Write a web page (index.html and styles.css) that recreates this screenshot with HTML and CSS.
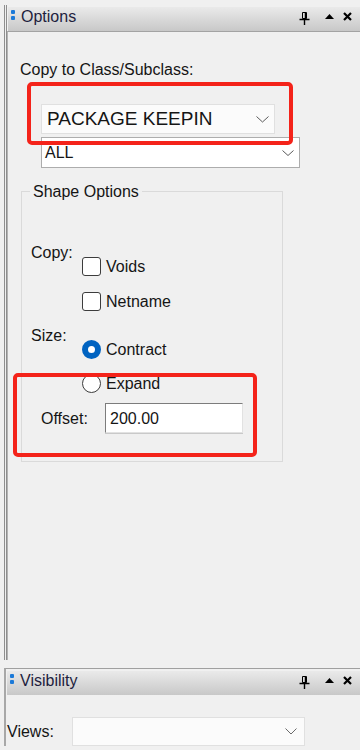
FILE: index.html
```html
<!DOCTYPE html>
<html lang="en">
  <head>
    <meta charset="UTF-8" />
    <meta name="viewport" content="width=device-width, initial-scale=1.0" />
    <title>Options</title>
    <link rel="stylesheet" href="styles.css">
  </head>
  <body>
    <section class="pane pane-options">
      <header class="titlebar">
        <span class="grip"><i></i><i></i></span>
        <span class="title">Options</span>
        <span class="tools">
          <svg class="tool-pin" width="11" height="13" viewBox="0 0 11 13">
            <path d="M3.5 0.5h4v6h-4z" fill="none" stroke="#000" />
            <path d="M6.5 1v5.5" stroke="#000" stroke-width="1.5" />
            <path d="M0.5 7.5h10M5.5 8v5" stroke="#000" stroke-width="1.4" />
          </svg>
          <svg class="tool-up" width="9" height="5" viewBox="0 0 9 5">
            <polygon points="0,5 4.5,0 9,5" fill="#000" />
          </svg>
          <svg class="tool-close" width="9" height="9" viewBox="0 0 9 9">
            <path d="M1 1l7 7M8 1l-7 7" stroke="#000" stroke-width="2.2" />
          </svg>
        </span>
      </header>

      <div class="pane-body">
        <div class="field-label">Copy to Class/Subclass:</div>

        <div class="combo combo-flat combo-class">
          <span>PACKAGE KEEPIN</span>
          <svg width="13" height="7" viewBox="0 0 13 7">
            <polyline points="0.5,0.5 6.5,6 12.5,0.5" fill="none" stroke="#5a5a5a" />
          </svg>
        </div>
        <div class="combo combo-sub">
          <span>ALL</span>
          <svg width="12" height="6" viewBox="0 0 12 6">
            <polyline points="0.5,0.5 6,5.5 11.5,0.5" fill="none" stroke="#5a5a5a" />
          </svg>
        </div>

        <fieldset class="group">
          <legend>Shape Options</legend>

          <div class="opt-row opt-copy">
            <div class="opt-label">Copy:</div>
            <div class="opt-list">
              <div class="check"><span class="box"></span>Voids</div>
              <div class="check"><span class="box"></span>Netname</div>
            </div>
          </div>

          <div class="opt-row opt-size">
            <div class="opt-label">Size:</div>
            <div class="opt-list">
              <div class="check"><span class="radio radio-on"></span>Contract</div>
              <div class="check"><span class="radio"></span>Expand</div>
            </div>
          </div>

          <div class="offset-row">
            <span class="offset-label">Offset:</span>
            <div class="text-field">200.00</div>
          </div>
        </fieldset>

        <!-- red callouts drawn over the form -->
        <div class="callout callout-class"></div>
        <div class="callout callout-offset"></div>
      </div>
    </section>

    <section class="pane pane-visibility">
      <header class="titlebar">
        <span class="grip"><i></i><i></i></span>
        <span class="title">Visibility</span>
        <span class="tools">
          <svg class="tool-pin" width="11" height="13" viewBox="0 0 11 13">
            <path d="M3.5 0.5h4v6h-4z" fill="none" stroke="#000" />
            <path d="M6.5 1v5.5" stroke="#000" stroke-width="1.5" />
            <path d="M0.5 7.5h10M5.5 8v5" stroke="#000" stroke-width="1.4" />
          </svg>
          <svg class="tool-up" width="9" height="5" viewBox="0 0 9 5">
            <polygon points="0,5 4.5,0 9,5" fill="#000" />
          </svg>
          <svg class="tool-close" width="9" height="9" viewBox="0 0 9 9">
            <path d="M1 1l7 7M8 1l-7 7" stroke="#000" stroke-width="2.2" />
          </svg>
        </span>
      </header>
      <div class="views-row">
        <span class="views-label">Views:</span>
        <div class="combo combo-flat combo-views">
          <span></span>
          <svg width="12" height="7" viewBox="0 0 12 7">
            <polyline points="0.5,0.5 6,6 11.5,0.5" fill="none" stroke="#6a6a6a" />
          </svg>
        </div>
      </div>
    </section>
  </body>
</html>
```

FILE: styles.css
```css
body {
  font-family: "Liberation Sans", Arial, sans-serif;
  font-size: 16px;
  line-height: 19px;
  margin: 0;
  background-color: #f0f0f0;
  color: #151515;
  height: 750px;
  overflow: hidden;
}
.pane {
  box-sizing: border-box;
  margin-left: 4px;
}
.pane-options {
  display: flex;
  flex-direction: column;
  height: 655px;
  margin-top: 5px;
  border-left: 3px double #8e8e8e;
}
.titlebar {
  display: flex;
  align-items: flex-start;
  height: 24px;
  margin: 2px 0 0 1px;
  background: linear-gradient(#eaeaea, #c8c8c8);
}
.grip {
  display: flex;
  flex-direction: column;
  gap: 2px;
  margin: 3px 0 0 3px;
}
.grip i {
  width: 4px;
  height: 4px;
  border-radius: 1px;
  background-color: #1c7ad8;
}
.title {
  margin-left: 6px;
  color: #1e1e3e;
}
.tools {
  display: flex;
  align-items: flex-start;
  margin-left: auto;
}
.tool-pin {
  margin-top: 5px;
}
.tool-up {
  margin: 7px 0 0 15px;
}
.tool-close {
  margin: 5px 8px 0 9px;
}
.pane-body {
  position: relative;
  flex: 1;
  padding: 28px 0 0 12px;
  border-top: 1px solid #a3a3a3;
  border-left: 1px solid #b4b4b4;
}
.combo {
  display: flex;
  align-items: center;
  justify-content: space-between;
  box-sizing: border-box;
  background-color: #fff;
  border: 1px solid #adadad;
}
.combo-flat {
  background-color: #fbfbfb;
  border-color: #e0e0e0;
}
.combo-class {
  width: 234px;
  height: 30px;
  margin: 25px 0 0 21px;
  padding: 0 5px 0 5px;
  font-size: 19px;
  line-height: 22px;
}
.combo-sub {
  width: 259px;
  height: 31px;
  margin: 3px 0 0 21px;
  padding: 0 5px 0 3px;
}
.group {
  box-sizing: border-box;
  width: 262px;
  margin: 14px 0 0 1px;
  padding: 42px 0 28px 0;
  border: 1px solid #dadada;
}
.group legend {
  margin-left: 8px;
  padding: 0 3px;
}
.opt-row {
  display: flex;
}
.opt-size {
  margin-top: 15px;
}
.opt-label {
  width: 51px;
  margin-left: 9px;
}
.opt-list {
  display: flex;
  flex-direction: column;
  padding-top: 14px;
  gap: 16px;
}
.opt-size .opt-list {
  gap: 15px;
}
.check {
  display: flex;
  align-items: center;
  gap: 5px;
  height: 19px;
}
.box {
  box-sizing: border-box;
  width: 19px;
  height: 19px;
  border: 1px solid #3c3c3c;
  border-radius: 3px;
  background-color: #fff;
}
.radio {
  box-sizing: border-box;
  width: 19px;
  height: 19px;
  border: 1px solid #3c3c3c;
  border-radius: 50%;
  background-color: #fff;
}
.radio-on {
  border: 6px solid #0063c1;
}
.offset-row {
  display: flex;
  align-items: center;
  margin-top: 10px;
}
.offset-label {
  width: 64px;
  margin-left: 19px;
}
.text-field {
  box-sizing: border-box;
  width: 138px;
  height: 30px;
  padding: 5px 0 0 4px;
  background-color: #fff;
  border: 1px solid #e2e2e2;
  border-top-color: #7c7c7c;
  border-left-color: #7c7c7c;
  box-shadow: 0 1px 0 #c9c9c9;
}
.callout {
  position: absolute;
  box-sizing: border-box;
  border: 4px solid #f4231a;
  border-radius: 5px;
}
.callout-class {
  left: 19px;
  top: 50px;
  width: 266px;
  height: 63px;
}
.callout-offset {
  left: 5px;
  top: 341px;
  width: 244px;
  height: 84px;
}
.pane-visibility {
  margin-top: 8px;
  border-top: 1px solid #a0a0a0;
  border-left: 2px solid #a8a8a8;
}
.views-row {
  display: flex;
  align-items: center;
  margin-top: 22px;
  padding-left: 1px;
}
.views-label {
  width: 65px;
}
.combo-views {
  width: 233px;
  height: 29px;
  padding: 0 7px 0 5px;
}
```
